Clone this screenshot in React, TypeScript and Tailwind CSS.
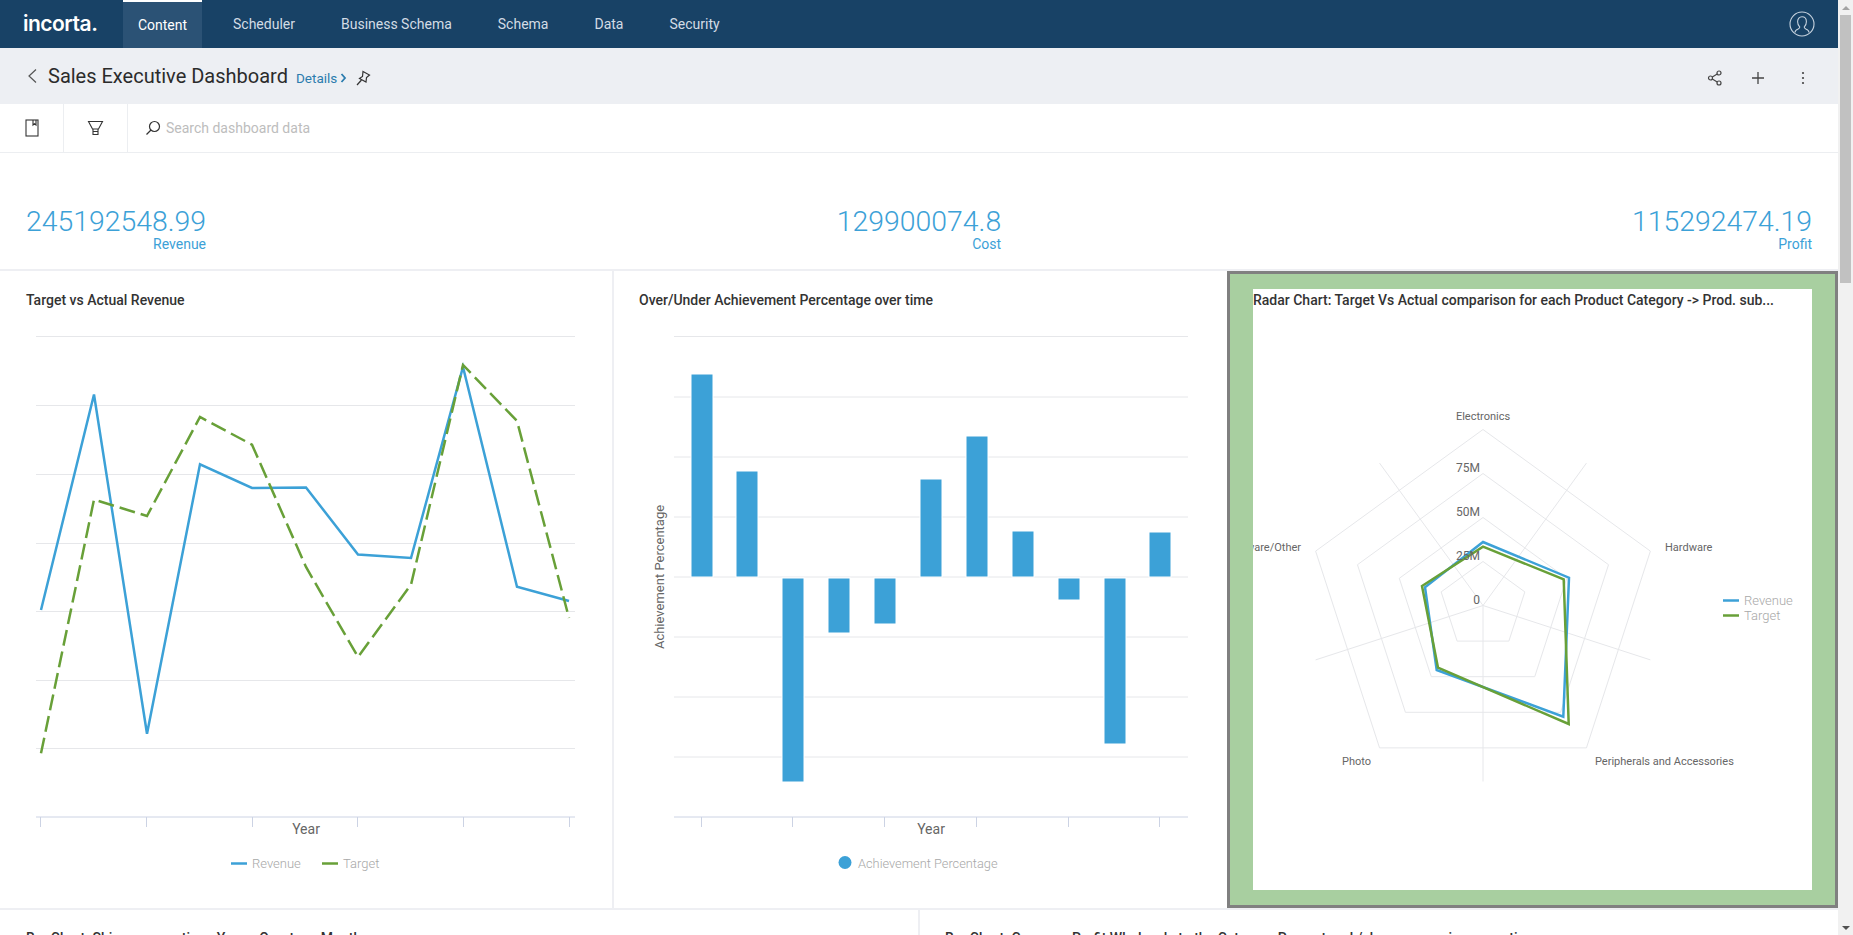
import React from "react";

const BLUE = "#3ca1d7";
const GREEN = "#68a038";
const GRID = "#e6e7ea";
const AXIS = "#ccd3e4";

const rx = [41, 94, 147, 200, 252, 306, 358, 411, 463, 517, 569];
const rev = [610, 394.5, 733.7, 464.3, 488, 487.5, 554.5, 558, 367, 586.7, 601];
const tar = [753.3, 499.6, 516, 417, 444.7, 567, 657, 584.7, 365, 421, 618];
const pts = (ys: number[]) => ys.map((y, i) => `${rx[i]},${y}`).join(" ");

const bars = [
  [691, 374, 577], [736, 471, 577], [782, 578, 782], [828, 578, 633], [874, 578, 624],
  [920, 479, 577], [966, 436, 577], [1012, 531, 577], [1058, 578, 600], [1104, 578, 744], [1149, 532, 577],
];

const cx = 1483;
const cy = 605.5;
const ring = (r: number, flip = 1) =>
  [0, 1, 2, 3, 4].map((i) => {
    const a = (i * 72 * Math.PI) / 180;
    return [cx + flip * r * Math.sin(a), cy - flip * r * Math.cos(a)];
  });

function NavItem({ label, active }: { label: string; active?: boolean }) {
  return (
    <div
      className={
        active
          ? "h-12 w-[79px] flex items-center justify-center bg-[#2b5275] border-t-2 border-white text-white text-[14px]"
          : "h-12 flex items-center px-[23px] text-[#d3dce5] text-[14px]"
      }
    >
      {label}
    </div>
  );
}

function Kpi({ value, label }: { value: string; label: string }) {
  return (
    <div className="flex flex-col items-end">
      <div className="text-[28.4px] leading-[32px] font-light text-[#3ca1d7]">{value}</div>
      <div className="text-[14px] leading-[16px] text-[#3ca1d7] -mt-[2px]">{label}</div>
    </div>
  );
}

export default function App() {
  return (
    <div className="h-[935px] w-full flex overflow-hidden bg-white font-['Roboto',sans-serif]">
      <div className="flex-1 min-w-0 flex flex-col">
        {/* nav */}
        <div className="h-12 shrink-0 bg-[#184266] flex items-center">
          <div className="w-[123px] pl-[23px] text-white text-[21px] font-semibold tracking-[-0.5px] font-['Inter',sans-serif]">incorta.</div>
          <NavItem label="Content" active />
          <div className="w-[8px]" />
          <NavItem label="Scheduler" />
          <NavItem label="Business Schema" />
          <NavItem label="Schema" />
          <NavItem label="Data" />
          <NavItem label="Security" />
          <div className="flex-1" />
          <svg width="26" height="26" viewBox="0 0 26 26" fill="none" stroke="#c6d2de" strokeWidth="1.1" className="mr-[23px]">
            <circle cx="13" cy="13" r="12" />
            <path d="M6 21.5c0-2.2 1.5-3 3.2-3.6 1.2-.5 1.6-1 1.6-1.8-1.2-1.2-2.2-3-2.2-5.4 0-3 1.8-5 4.4-5s4.4 2 4.4 5c0 2.4-1 4.2-2.2 5.4 0 .8.4 1.3 1.6 1.8 1.7.6 3.2 1.4 3.2 3.6" />
          </svg>
        </div>
        {/* sub header */}
        <div className="h-14 shrink-0 bg-[#edeff3] flex items-center pt-[4px]">
          <svg width="12" height="16" viewBox="0 0 12 16" fill="none" stroke="#555" strokeWidth="1.2" className="ml-[26px] -mt-[4px]">
            <path d="M10 1.5 3 8l7 6.5" />
          </svg>
          <div className="ml-[10px] text-[20px] leading-[24px] text-[#2b2b2b] -mt-[4px]">Sales Executive Dashboard</div>
          <div className="ml-[8px] text-[13.5px] text-[#2b7cae] flex items-center">
            Details
            <svg width="7" height="10" viewBox="0 0 7 10" fill="none" stroke="#2b7cae" strokeWidth="1.8" className="ml-[3px]">
              <path d="M1.5 1 5 5 1.5 9" />
            </svg>
          </div>
          <svg width="16" height="16" viewBox="0 0 16 16" fill="none" stroke="#333" strokeWidth="1.2" className="ml-[8px]">
            <path d="M8 1.5 14.500 5 11.500 7.500 11 12 4.500 8.500 7.500 6.500z" />
            <path d="M6.500 10 2 15" />
          </svg>
          <div className="flex-1" />
          <svg width="16" height="16" viewBox="0 0 16 16" fill="none" stroke="#444" strokeWidth="1.2" className="mr-[28px]">
            <circle cx="3.5" cy="8" r="2" />
            <circle cx="12" cy="3" r="2" />
            <circle cx="12" cy="13" r="2" />
            <path d="M5.300 7 10.200 4M5.300 9l4.900 3" />
          </svg>
          <svg width="14" height="14" viewBox="0 0 14 14" fill="none" stroke="#444" strokeWidth="1.3" className="mr-[36px]">
            <path d="M7 1v12M1 7h12" />
          </svg>
          <svg width="4" height="14" viewBox="0 0 4 14" fill="#444" className="mr-[33px]">
            <circle cx="2" cy="2" r="1.1" />
            <circle cx="2" cy="7" r="1.1" />
            <circle cx="2" cy="12" r="1.1" />
          </svg>
        </div>
        {/* toolbar */}
        <div className="h-[49px] shrink-0 bg-white border-b border-[#eceef1] flex items-stretch">
          <div className="w-[64px] border-r border-[#eceef1] flex items-center justify-center">
            <svg width="14" height="18" viewBox="0 0 14 18" fill="none" stroke="#333" strokeWidth="1.1">
              <rect x="1" y="1" width="12" height="16" />
              <path d="M8 1v5l1.500-1.200L11 6V1" />
            </svg>
          </div>
          <div className="w-[64px] border-r border-[#eceef1] flex items-center justify-center">
            <svg width="17" height="16" viewBox="0 0 17 16" fill="none" stroke="#333" strokeWidth="1.1">
              <path d="M1.500 1.500h14l-4 7.500H5.500z" />
              <path d="M6 9v5.500h5V9M6 11.500h5" />
            </svg>
          </div>
          <div className="flex items-center pl-[17px]">
            <svg width="16" height="16" viewBox="0 0 16 16" fill="none" stroke="#333" strokeWidth="1.2">
              <circle cx="9.5" cy="6.5" r="5" />
              <path d="M6 10 1.500 14.500" />
            </svg>
            <div className="ml-[5px] text-[14px] text-[#bdbdbd]">Search dashboard data</div>
          </div>
        </div>
        {/* KPI */}
        <div className="h-[118px] shrink-0 border-b-2 border-[#eeeff3] flex items-start justify-between px-[26px] pt-[53px]">
          <Kpi value="245192548.99" label="Revenue" />
          <Kpi value="129900074.8" label="Cost" />
          <Kpi value="115292474.19" label="Profit" />
        </div>
        {/* charts row */}
        <div className="h-[637px] shrink-0 flex">
          {/* line chart */}
          <div className="w-[614px] shrink-0 border-r-2 border-[#eeeff3] flex flex-col">
            <div className="h-[44px] shrink-0 pl-[26px] pt-[20px] text-[14px] leading-[18px] font-medium text-[#333]">Target vs Actual Revenue</div>
            <svg width="612" height="593" viewBox="0 315 612 593" className="block">
              {[336.5, 405.5, 474.5, 543.5, 611.5, 680.5, 748.5].map((y) => (
                <line key={y} x1="36" x2="575" y1={y} y2={y} stroke={GRID} strokeWidth="1" />
              ))}
              <line x1="36" x2="575" y1="817" y2="817" stroke={AXIS} />
              {[40.5, 146.5, 252.5, 357.5, 463.5, 569.5].map((x) => (
                <line key={x} x1={x} x2={x} y1="817" y2="827" stroke={AXIS} />
              ))}
              <polyline points={pts(rev)} fill="none" stroke={BLUE} strokeWidth="2.5" />
              <polyline points={pts(tar)} fill="none" stroke={GREEN} strokeWidth="2.5" strokeDasharray="16 6" />
              <text x="306" y="834" textAnchor="middle" fontSize="14" fill="#666">Year</text>
              <line x1="231" x2="247" y1="863.5" y2="863.5" stroke={BLUE} strokeWidth="2.5" />
              <text x="252" y="867.5" fontSize="13" fontWeight="300" fill="#a8a8a8">Revenue</text>
              <line x1="322" x2="338" y1="863.5" y2="863.5" stroke={GREEN} strokeWidth="2.5" />
              <text x="343" y="867.5" fontSize="13" fontWeight="300" fill="#a8a8a8">Target</text>
            </svg>
          </div>
          {/* bar chart */}
          <div className="w-[613px] shrink-0 flex flex-col">
            <div className="h-[44px] shrink-0 pl-[25px] pt-[20px] text-[14px] leading-[18px] font-medium text-[#333]">Over/Under Achievement Percentage over time</div>
            <svg width="613" height="593" viewBox="614 315 613 593" className="block">
              {[336.5, 397, 457, 517, 577, 637, 697, 757].map((y) => (
                <line key={y} x1="674" x2="1188" y1={y} y2={y} stroke={GRID} strokeWidth="1" />
              ))}
              <line x1="674" x2="1188" y1="817" y2="817" stroke={AXIS} />
              {[701.5, 792.5, 884.5, 976.5, 1068.5, 1159.5].map((x) => (
                <line key={x} x1={x} x2={x} y1="817" y2="827" stroke={AXIS} />
              ))}
              {bars.map(([x, t, b]) => (
                <rect key={x} x={x} y={t} width="22" height={b - t} fill={BLUE} stroke="#fff" strokeWidth="1" />
              ))}
              <text transform="translate(664 577) rotate(-90)" textAnchor="middle" fontSize="13" fill="#666">Achievement Percentage</text>
              <text x="931" y="834" textAnchor="middle" fontSize="14" fill="#666">Year</text>
              <circle cx="845" cy="862.5" r="6.5" fill={BLUE} />
              <text x="858" y="867.5" fontSize="12.8" fontWeight="300" fill="#a8a8a8">Achievement Percentage</text>
            </svg>
          </div>
          {/* radar */}
          <div className="flex-1 min-w-0 border-[3px] border-[#808080] bg-[#a8cfa0] pl-[23px] pr-[23px] pt-[15px] pb-[15px]">
            <div className="h-full bg-white flex flex-col overflow-hidden">
              <div className="h-[26px] shrink-0 pt-[2px] text-[14px] leading-[18px] font-medium text-[#333] whitespace-nowrap">Radar Chart: Target Vs Actual comparison for each Product Category -&gt; Prod. sub...</div>
              <svg width="559" height="575" viewBox="1253 315 559 575" className="block">
                {[176, 132, 88, 44].map((r) => (
                  <polygon key={r} points={ring(r).map((p) => p.join(",")).join(" ")} fill="none" stroke={GRID} />
                ))}
                {ring(176, -1).map(([x, y], i) => (
                  <line key={i} x1={cx} y1={cy} x2={x} y2={y} stroke={GRID} />
                ))}
                <polygon points="1483,542 1569,577.7 1563.3,716.7 1436.7,670 1425,587.3" fill="none" stroke={BLUE} strokeWidth="2.5" />
                <polygon points="1483,546.7 1563.7,579.3 1568.7,724 1438,667.7 1422,586" fill="none" stroke={GREEN} strokeWidth="2.5" />
                <g fontSize="11" fill="#666">
                  <text x="1483" y="420" textAnchor="middle">Electronics</text>
                  <text x="1665" y="551">Hardware</text>
                  <text x="1301" y="551" textAnchor="end">Software/Other</text>
                  <text x="1342" y="765">Photo</text>
                  <text x="1595" y="765">Peripherals and Accessories</text>
                  <text x="1480" y="472" textAnchor="end" fontSize="12">75M</text>
                  <text x="1480" y="516" textAnchor="end" fontSize="12">50M</text>
                  <text x="1480" y="560" textAnchor="end" fontSize="12">25M</text>
                  <text x="1480" y="604" textAnchor="end" fontSize="12">0</text>
                </g>
                <line x1="1723" x2="1739" y1="600.5" y2="600.5" stroke={BLUE} strokeWidth="2.5" />
                <text x="1744" y="604.5" fontSize="13" fontWeight="300" fill="#a8a8a8">Revenue</text>
                <line x1="1723" x2="1739" y1="615.5" y2="615.5" stroke={GREEN} strokeWidth="2.5" />
                <text x="1744" y="619.5" fontSize="13" fontWeight="300" fill="#a8a8a8">Target</text>
              </svg>
            </div>
          </div>
        </div>
        {/* bottom row */}
        <div className="flex-1 min-h-0 border-t-2 border-[#eeeff3] flex overflow-hidden">
          <div className="w-[920px] shrink-0 border-r-2 border-[#eeeff3] pl-[26px] pt-[19px] text-[14px] leading-[18px] font-medium text-[#333] whitespace-nowrap">Bar Chart: Shippers over time: Year &gt; Quarter &gt; Month</div>
          <div className="flex-1 pl-[25px] pt-[19px] text-[14px] leading-[18px] font-medium text-[#333] whitespace-nowrap">Bar Chart: Compare Profit Wholesale to the Category Percent rank/share comparison over time</div>
        </div>
      </div>
      {/* scrollbar */}
      <div className="w-[15px] shrink-0 bg-[#f1f1f1] flex flex-col items-center">
        <div className="h-[15px] shrink-0 flex items-center justify-center">
          <div className="w-0 h-0 border-x-[4px] border-x-transparent border-b-[4px] border-b-[#a3a3a3]" />
        </div>
        <div className="h-[268px] w-[11px] bg-[#c1c1c1]" />
        <div className="flex-1" />
        <div className="h-[15px] shrink-0 flex items-center justify-center">
          <div className="w-0 h-0 border-x-[4px] border-x-transparent border-t-[4px] border-t-[#505050]" />
        </div>
      </div>
    </div>
  );
}
